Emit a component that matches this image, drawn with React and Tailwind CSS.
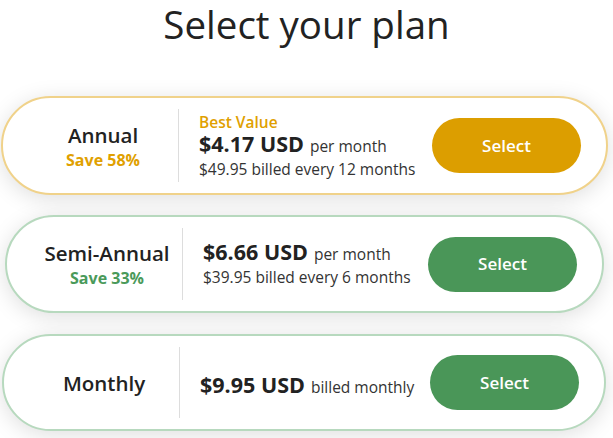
import React from 'react'

// Plan picker: three pill-shaped cards, the first one highlighted in gold

const plans = [
  {
    name: 'Annual',
    save: 'Save 58%',
    badge: 'Best Value',
    price: '$4.17 USD',
    unit: 'per month',
    billed: '$49.95 billed every 12 months',
    tone: 'gold',
    card: 'ml-[1px] w-[607px] h-[99px] mt-[48px]',
  },
  {
    name: 'Semi-Annual',
    save: 'Save 33%',
    price: '$6.66 USD',
    unit: 'per month',
    billed: '$39.95 billed every 6 months',
    tone: 'green',
    card: 'ml-[5px] w-[599px] h-[98px] mt-[20px]',
  },
  {
    name: 'Monthly',
    price: '$9.95 USD',
    unit: 'billed monthly',
    tone: 'green',
    card: 'ml-[2px] w-[604px] h-[97px] mt-[21px]',
  },
]

function PlanCard({ plan }) {
  const gold = plan.tone === 'gold'
  return (
    <div
      className={
        'flex items-center rounded-full border-2 bg-white pl-[25px] pr-[25px] shadow-[0_4px_22px_rgba(0,0,0,0.13)] ' +
        (gold ? 'border-[#f0d28a] ' : 'border-[#b7d9be] ') +
        plan.card
      }
    >
      {/* ── Name / saving ── */}
      <div className="w-[150px] text-center">
        <div className="text-[20.5px] leading-[28px] font-semibold text-[#222]">{plan.name}</div>
        {plan.save && (
          <div className={'text-[16px] leading-[22px] font-bold ' + (gold ? 'text-[#e0a000]' : 'text-[#4a9a5a]')}>
            {plan.save}
          </div>
        )}
      </div>

      <div className="w-px self-stretch my-[11px] bg-[#dddddd]" />

      {/* ── Price ── */}
      <div className={'flex-1 pl-5 ' + (plan.billed ? '' : 'pt-[6px]')}>
        {plan.badge && (
          <div className="text-[15.5px] leading-[20px] font-semibold text-[#e0a000]">{plan.badge}</div>
        )}
        <div className="leading-[24px] whitespace-nowrap text-[#222]">
          <span className="text-[21.5px] font-bold">{plan.price}</span>
          <span className="ml-[6px] text-[15.5px] text-[#333]">{plan.unit}</span>
        </div>
        {plan.billed && (
          <div className="text-[15.5px] leading-[22px] whitespace-nowrap text-[#333]">{plan.billed}</div>
        )}
      </div>

      <button
        type="button"
        className={
          'w-[149px] h-[55px] shrink-0 rounded-full text-[17px] font-semibold text-white ' +
          (gold ? 'bg-[#dc9e00]' : 'bg-[#4a9658]')
        }
      >
        Select
      </button>
    </div>
  )
}

export default function App() {
  return (
    <div className="min-h-screen bg-white font-['Open_Sans',sans-serif]">
      <h1 className="text-center text-[38.5px] leading-[48px] text-[#222]">Select your plan</h1>
      <div className="flex flex-col">
        {plans.map(p => (
          <PlanCard key={p.name} plan={p} />
        ))}
      </div>
    </div>
  )
}
